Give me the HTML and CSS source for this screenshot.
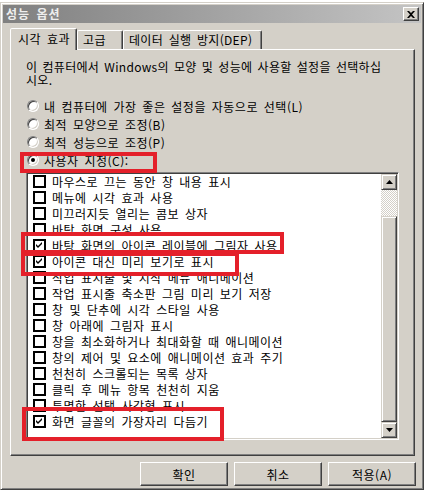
FILE: index.html
```html
<!DOCTYPE html>
<html lang="ko">
<head>
    <meta charset="UTF-8">
    <title>성능 옵션</title>
    <link rel="stylesheet" href="styles.css">
</head>
<body>
    <div class="window">
        <div class="titlebar">
            <span class="title">성능 옵션</span>
            <button class="close">
                <svg width="8" height="7" viewBox="0 0 8 7"><path d="M0 0h2l2 2 2-2h2L5 3.5 8 7H6L4 5 2 7H0l3-3.5z" fill="#000"/></svg>
            </button>
        </div>

        <div class="client">
            <div class="tabs">
                <div class="tab active">시각 효과</div>
                <div class="tab tab-adv">고급</div>
                <div class="tab tab-dep">데이터 실행 방지(DEP)</div>
            </div>

            <div class="panel">
                <p class="desc">이 컴퓨터에서 Windows의 모양 및 성능에 사용할 설정을 선택하십<br>시오.</p>

                <div class="radios">
                    <div class="radio"><span class="dot"></span>내 컴퓨터에 가장 좋은 설정을 자동으로 선택(L)</div>
                    <div class="radio"><span class="dot"></span>최적 모양으로 조정(B)</div>
                    <div class="radio"><span class="dot"></span>최적 성능으로 조정(P)</div>
                    <div class="radio"><span class="dot on"></span>사용자 지정(C):</div>
                </div>

                <div class="listbox">
                    <div class="items">
                        <ul>
                            <li><span class="box"></span>마우스로 끄는 동안 창 내용 표시</li>
                            <li><span class="box"></span>메뉴에 시각 효과 사용</li>
                            <li><span class="box"></span>미끄러지듯 열리는 콤보 상자</li>
                            <li><span class="box"></span>바탕 화면 구성 사용</li>
                            <li><span class="box checked"><svg width="9" height="9" viewBox="0 0 9 9"><polygon points="1,3 3,5 7,1 7,3 3,7 1,5" fill="#000"/></svg></span>바탕 화면의 아이콘 레이블에 그림자 사용</li>
                            <li><span class="box checked"><svg width="9" height="9" viewBox="0 0 9 9"><polygon points="1,3 3,5 7,1 7,3 3,7 1,5" fill="#000"/></svg></span>아이콘 대신 미리 보기로 표시</li>
                            <li><span class="box"></span>작업 표시줄 및 시작 메뉴 애니메이션</li>
                            <li><span class="box"></span>작업 표시줄 축소판 그림 미리 보기 저장</li>
                            <li><span class="box"></span>창 및 단추에 시각 스타일 사용</li>
                            <li><span class="box"></span>창 아래에 그림자 표시</li>
                            <li><span class="box"></span>창을 최소화하거나 최대화할 때 애니메이션</li>
                            <li><span class="box"></span>창의 제어 및 요소에 애니메이션 효과 주기</li>
                            <li><span class="box"></span>천천히 스크롤되는 목록 상자</li>
                            <li><span class="box"></span>클릭 후 메뉴 항목 천천히 지움</li>
                            <li><span class="box"></span>투명한 선택 사각형 표시</li>
                            <li><span class="box checked"><svg width="9" height="9" viewBox="0 0 9 9"><polygon points="1,3 3,5 7,1 7,3 3,7 1,5" fill="#000"/></svg></span>화면 글꼴의 가장자리 다듬기</li>
                        </ul>
                    </div>
                    <div class="vscroll">
                        <div class="sbtn">
                            <svg width="7" height="4" viewBox="0 0 7 4"><polygon points="3.5,0 7,4 0,4" fill="#000"/></svg>
                        </div>
                        <div class="track"></div>
                        <div class="thumb"></div>
                        <div class="sbtn">
                            <svg width="7" height="4" viewBox="0 0 7 4"><polygon points="0,0 7,0 3.5,4" fill="#000"/></svg>
                        </div>
                    </div>
                </div>
            </div>

            <div class="buttons">
                <button class="button">확인</button>
                <button class="button">취소</button>
                <button class="button">적용(A)</button>
            </div>
        </div>
    </div>

    <div class="mark mark-custom"></div>
    <div class="mark mark-shadow"></div>
    <div class="mark mark-thumbs"></div>
    <div class="mark mark-fonts"></div>
</body>
</html>
```

FILE: styles.css
```css
body {
    margin: 0;
    width: 424px;
    height: 494px;
    overflow: hidden;
    position: relative;
    background: #fff;
    font-family: 'Noto Sans CJK KR', 'Liberation Sans', sans-serif;
    font-size: 12px;
    letter-spacing: 0.5px;
    word-spacing: 2px;
    color: #000;
}

.window {
    margin-top: 2px;
    width: 424px;
    box-sizing: border-box;
    padding: 2px;
    background: #d4d0c8;
    border: 1px solid;
    border-color: #d4d0c8 #404040 #404040 #d4d0c8;
    box-shadow: inset 1px 1px #fff, inset -1px -1px #808080;
}

.titlebar {
    height: 18px;
    display: flex;
    align-items: center;
    justify-content: space-between;
    padding: 0 2px 0 3px;
    background: linear-gradient(to right, #808080, #c4c4c4);
}

.title {
    color: #eeeeee;
    font-weight: bold;
    font-size: 12px;
    letter-spacing: 1px;
    line-height: 18px;
}

.close,
.button {
    font-family: inherit;
    letter-spacing: inherit;
    background: #d4d0c8;
    border: 1px solid;
    border-color: #fff #404040 #404040 #fff;
    box-shadow: inset -1px -1px #808080;
    padding: 0;
    color: #000;
}

.close {
    width: 16px;
    height: 14px;
    display: flex;
    align-items: center;
    justify-content: center;
}

.client {
    padding: 5px 6px 1px 7px;
}

.tabs {
    display: flex;
    align-items: flex-end;
    height: 21px;
}

.tab {
    height: 19px;
    box-sizing: border-box;
    display: flex;
    align-items: center;
    padding-left: 5px;
    border: 1px solid;
    border-bottom: none;
    border-color: #fff #404040 transparent #fff;
    box-shadow: inset -1px 0 #808080;
    border-radius: 2px 2px 0 0;
    line-height: 14px;
    white-space: nowrap;
}

.tab.active {
    width: 67px;
    height: 22px;
    margin-bottom: -1px;
    padding-left: 7px;
    padding-bottom: 2px;
    position: relative;
    z-index: 1;
    background: #d4d0c8;
}

.tab-adv {
    width: 46px;
}

.tab-dep {
    width: 139px;
    letter-spacing: 0.3px;
}

.panel {
    height: 407px;
    box-sizing: border-box;
    padding: 10px 15px 0 15px;
    border: 1px solid;
    border-color: #fff #404040 #404040 #fff;
    box-shadow: inset -1px -1px #808080;
}

.desc {
    margin: 0;
    line-height: 13px;
    letter-spacing: 0.3px;
    word-spacing: 1.5px;
}

.radios {
    margin-top: 11px;
}

.radio {
    height: 18px;
    display: flex;
    align-items: center;
    gap: 5px;
    padding-left: 1px;
}

.dot {
    width: 12px;
    height: 12px;
    box-sizing: border-box;
    border-radius: 50%;
    background: #fff;
    border: 1px solid;
    border-color: #808080 #fff #fff #808080;
    box-shadow: inset 1px 1px #404040, inset -1px -1px #d4d0c8;
    display: flex;
    align-items: center;
    justify-content: center;
}

.dot.on::after {
    content: "";
    width: 4px;
    height: 4px;
    border-radius: 50%;
    background: #000;
}

.listbox {
    margin-top: 3px;
    width: 373px;
    height: 268px;
    box-sizing: border-box;
    display: flex;
    padding: 1px;
    background: #fff;
    border: 1px solid;
    border-color: #808080 #fff #fff #808080;
    box-shadow: inset 1px 1px #404040, inset -1px -1px #d4d0c8;
}

.items {
    flex: 1;
    overflow: hidden;
}

.items ul {
    list-style: none;
    margin: -1px 0 0 0;
    padding: 0;
}

.items li {
    height: 16px;
    display: flex;
    align-items: center;
    gap: 6px;
    padding-left: 5px;
    white-space: nowrap;
}

.box {
    width: 13px;
    height: 13px;
    box-sizing: border-box;
    border: 1px solid #000;
    box-shadow: inset 0 0 0 1px #000;
    background: #fff;
    display: flex;
    align-items: center;
    justify-content: center;
    flex: none;
}

.vscroll {
    width: 16px;
    display: flex;
    flex-direction: column;
}

.sbtn {
    height: 16px;
    box-sizing: border-box;
    display: flex;
    align-items: center;
    justify-content: center;
    background: #d4d0c8;
    border: 1px solid;
    border-color: #d4d0c8 #404040 #404040 #d4d0c8;
    box-shadow: inset 1px 1px #fff, inset -1px -1px #808080;
}

.track {
    height: 26px;
    background: repeating-conic-gradient(#d4d0c8 0 25%, #fff 0 50%) 0 0 / 2px 2px;
}

.thumb {
    flex: 1;
    box-sizing: border-box;
    background: #d4d0c8;
    border: 1px solid;
    border-color: #d4d0c8 #404040 #404040 #d4d0c8;
    box-shadow: inset 1px 1px #fff, inset -1px -1px #808080;
}

.buttons {
    display: flex;
    justify-content: flex-end;
    gap: 6px;
    margin-top: 6px;
    margin-right: -1px;
}

.button {
    width: 88px;
    height: 24px;
    font-size: 12px;
}

/* red annotation boxes drawn over the dialog */
.mark {
    position: absolute;
    box-sizing: border-box;
    border: 4px solid #e4202a;
}

.mark-custom {
    left: 20px;
    top: 152px;
    width: 137px;
    height: 21px;
}

.mark-shadow {
    left: 21px;
    top: 232px;
    width: 263px;
    height: 22px;
}

.mark-thumbs {
    left: 21px;
    top: 252px;
    width: 218px;
    height: 24px;
}

.mark-fonts {
    left: 22px;
    top: 407px;
    width: 202px;
    height: 34px;
}
```
